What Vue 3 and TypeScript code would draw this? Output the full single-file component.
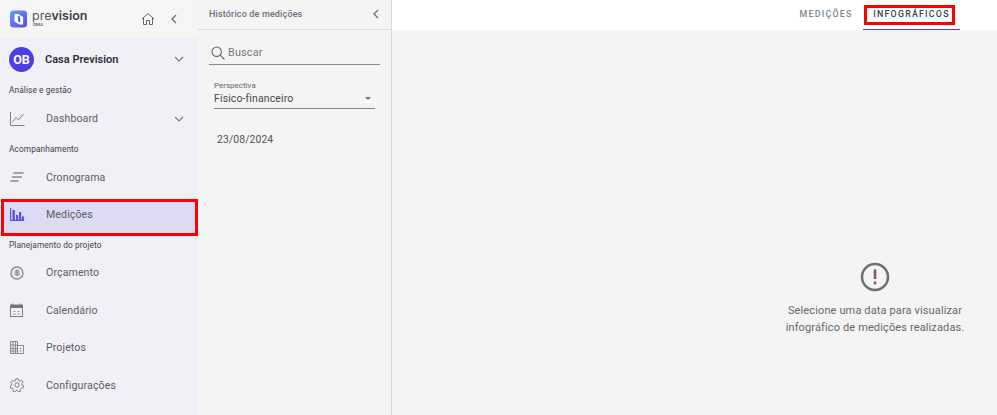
<script setup lang="ts">
interface Item { label: string; icon: string; active?: boolean; chevron?: boolean }
interface Group { title: string; items: Item[]; cls: string }
const groups: Group[] = [
  { title: 'Análise e gestão', cls: 'g1', items: [{ label: 'Dashboard', icon: 'chart', chevron: true }] },
  { title: 'Acompanhamento', cls: 'g2', items: [{ label: 'Cronograma', icon: 'lines' }, { label: 'Medições', icon: 'bars', active: true }] },
  { title: 'Planejamento do projeto', cls: 'g3', items: [{ label: 'Orçamento', icon: 'coin' }, { label: 'Calendário', icon: 'cal' }, { label: 'Projetos', icon: 'build' }, { label: 'Configurações', icon: 'gear' }] },
]
</script>

<template>
  <div class="app">
    <aside class="nav">
      <div class="brand">
        <svg class="logo" width="18" height="18" viewBox="0 0 18 18">
          <defs><linearGradient id="lg" x1="0" y1="0" x2="1" y2="1"><stop offset="0" stop-color="#62a0f6" /><stop offset="1" stop-color="#5a46e6" /></linearGradient></defs>
          <rect width="17" height="17" y="0.5" rx="3.500" fill="url(#lg)" />
          <path d="M4.500 4h3.600l5 3v7.500H9.500L4.500 11.500z" fill="#fff" />
          <path d="M8.100 5.500l2 1.200v6l-2-1.200z" fill="#4a5fe8" />
        </svg>
        <div class="wordmark">
          <div class="pv">pre<b>vision</b></div>
          <div class="obra">OBRA</div>
        </div>
        <svg class="home" width="14" height="14" viewBox="0 0 14 14" fill="none" stroke="#6b6258" stroke-width="1">
          <path d="M1 7L7 1.500 13 7M2.500 6v6.500h3v-4h3v4h3V6" />
        </svg>
        <svg class="back" width="8" height="10" viewBox="0 0 8 10" fill="none" stroke="#6a6a6a" stroke-width="1.300"><path d="M6 1L2 5l4 4" /></svg>
      </div>
      <div class="lav">
        <div class="account">
          <div class="avatar">OB</div>
          <div class="acname">Casa Prevision</div>
          <svg class="chev" width="10" height="6" viewBox="0 0 10 6" fill="none" stroke="#777" stroke-width="1.100"><path d="M1 1l4 4 4-4" /></svg>
        </div>
        <section v-for="g in groups" :key="g.title" :class="g.cls">
          <div class="gtitle">{{ g.title }}</div>
          <div v-for="it in g.items" :key="it.label" class="item" :class="{ active: it.active }">
            <span class="ico">
              <svg v-if="it.icon === 'chart'" width="15" height="14" viewBox="0 0 15 14" fill="none" stroke="#808080" stroke-width="1"><path d="M.5 0v13.500H14.500M2.500 10L6 5.500l2.500 2.500L13.500 2" /></svg>
              <svg v-else-if="it.icon === 'lines'" width="14" height="10" viewBox="0 0 14 10" fill="none" stroke="#8a8a8a" stroke-width="1.500"><path d="M3.500 1h10M2 5h10M.5 9h8" /></svg>
              <svg v-else-if="it.icon === 'bars'" width="14" height="13" viewBox="0 0 14 13" fill="#5a50e0"><path d="M0 0h1.200v11.800H14V13H0zM2.500 2h2.400v9.800H2.500zM6 7h2.200v4.800H6zM9 4h2.200v7.800H9zM11.800 8.500H14v3.300h-2.200z" /></svg>
              <svg v-else-if="it.icon === 'coin'" width="14" height="14" viewBox="0 0 14 14"><circle cx="7" cy="7" r="6" fill="none" stroke="#8a8a8a" stroke-width="1.400" /><circle cx="7" cy="7" r="3.500" fill="#c9c9ce" /><text x="7" y="9.200" text-anchor="middle" font-size="6.500" fill="#666" font-family="Roboto, sans-serif">$</text></svg>
              <svg v-else-if="it.icon === 'cal'" width="13" height="14" viewBox="0 0 13 14"><rect x=".5" y="2" width="12" height="11.500" fill="none" stroke="#808080" /><rect x=".5" y="2" width="12" height="3" fill="#757575" /><path d="M3 .5v2M10 .5v2" stroke="#757575" /><path d="M3.500 8.500h2M7.500 8.500h2M3.500 11h2M7.500 11h2" stroke="#999" /></svg>
              <svg v-else-if="it.icon === 'build'" width="14" height="13" viewBox="0 0 14 13" fill="none" stroke="#808080" stroke-width=".9"><path d="M.5.500h7v12h-7zM7.500 4.500h6v8h-6zM.5 4h7M.5 7.500h7M.5 10h7M3 .5v12M5.500.5v12M9.500 7.500h2M9.500 10h2" /></svg>
              <svg v-else width="14" height="14" viewBox="0 0 14 14" fill="none" stroke="#808080" stroke-width="1"><circle cx="7" cy="7" r="2.200" /><path d="M5.800.8h2.400l.4 1.800 1.300.6 1.600-.9 1.500 1.800-1.100 1.400.2 1.500 1.600.9-.6 2.200-1.800.1-.9 1.200.3 1.800-2.200.7-1-1.500H6.200l-1 1.500-2.200-.7.3-1.800-.9-1.200-1.800-.1L0 8.100l1.600-.9.200-1.500L.700 4.300l1.500-1.800 1.600.9 1.300-.6z" /></svg>
            </span>
            <span class="ilabel">{{ it.label }}</span>
            <svg v-if="it.chevron" class="chev" width="10" height="6" viewBox="0 0 10 6" fill="none" stroke="#777" stroke-width="1.100"><path d="M1 1l4 4 4-4" /></svg>
            <div v-if="it.active" class="mark nav-mark"></div>
          </div>
        </section>
      </div>
    </aside>

    <aside class="panel">
      <div class="phead">
        <span>Histórico de medições</span>
        <svg width="8" height="10" viewBox="0 0 8 10" fill="none" stroke="#6a6a6a" stroke-width="1.200"><path d="M6 1L2 5l4 4" /></svg>
      </div>
      <div class="search">
        <svg width="14" height="14" viewBox="0 0 14 14" fill="none" stroke="#666" stroke-width="1.100"><circle cx="5.700" cy="5.700" r="4.700" /><path d="M9.200 9.200l4.300 4.300" /></svg>
        <span>Buscar</span>
      </div>
      <div class="select">
        <div class="slabel">Perspectiva</div>
        <div class="sval"><span>Físico-financeiro</span><i class="caret"></i></div>
      </div>
      <div class="date">23/08/2024</div>
    </aside>

    <main class="main">
      <div class="tabs">
        <div class="tab">MEDIÇÕES</div>
        <div class="tab on">INFOGRÁFICOS<div class="mark tab-mark"></div></div>
      </div>
      <div class="empty">
        <svg width="30" height="30" viewBox="0 0 30 30"><circle cx="15" cy="15" r="13" fill="none" stroke="#6e6e6e" stroke-width="2.500" /><rect x="13.700" y="7.500" width="2.600" height="9.500" fill="#8a5a5a" /><rect x="13.700" y="19.500" width="2.600" height="2.800" fill="#8a5a5a" /></svg>
        <p>Selecione uma data para visualizar<br />infográfico de medições realizadas.</p>
      </div>
    </main>
  </div>
</template>

<style>
html, body { margin: 0; }
</style>

<style scoped>
.app { display: flex; width: 997px; height: 415px; overflow: hidden; font-family: Roboto, "Liberation Sans", sans-serif; background: #f4f4f4; color: #555; }
.nav { width: 198px; flex: none; display: flex; flex-direction: column; background: #f5f5f5; }
.brand { height: 38px; display: flex; align-items: center; padding-left: 10px; box-sizing: border-box; flex: none; }
.logo { flex: none; margin-top: -1px; }
.wordmark { margin-left: 4px; width: 109px; margin-top: -2px; }
.pv { font-family: Inter, "Open Sans", sans-serif; font-size: 12.500px; line-height: 14px; color: #55555f; }
.pv b { font-weight: 600; color: #3d3d48; }
.obra { font-size: 3.500px; line-height: 5px; color: #666; font-weight: 700; letter-spacing: .2px; margin-left: 1px; }
.home { margin-top: -1px; }
.back { margin-left: 15px; margin-top: -1px; }
.lav { flex: 1; background: #f0f0f6; }
.account { height: 42px; display: flex; align-items: center; padding-left: 9px; box-sizing: border-box; position: relative; }
.avatar { width: 25px; height: 25px; border-radius: 50%; background: #4c3ee0; color: #fff; font-size: 12.500px; font-weight: 700; text-align: center; line-height: 25px; flex: none; margin-top: 1px; }
.acname { margin-left: 11px; font-size: 11px; font-weight: 600; color: #2f2f38; flex: 1; margin-top: 1px; }
.chev { position: absolute; right: 14px; top: 50%; margin-top: -3px; }
.gtitle { font-size: 8.300px; line-height: 12px; color: #444; padding-left: 9px; letter-spacing: .1px; }
.g1 { padding-top: 4px; }
.g2 { padding-top: 5px; }
.g3 { padding-top: 5.500px; }
.item { position: relative; height: 37.500px; display: flex; align-items: center; }
.g1 .item { margin-top: 4px; }
.g2 .item { margin-top: 4px; }
.g2 .item + .item { margin-top: 0; }
.g3 .gtitle + .item { margin-top: 2.800px; }
.ico { width: 46px; flex: none; display: flex; padding-left: 10px; box-sizing: border-box; align-items: center; }
.ilabel { font-size: 10.600px; color: #5c5c5c; letter-spacing: .1px; }
.item.active::before { content: ""; position: absolute; left: 3px; right: 2px; top: 4px; bottom: -1px; background: #dcdaf5; z-index: 0; }
.item > * { position: relative; z-index: 1; }
.item > .chev { position: absolute; }
.mark { position: absolute; border: 3px solid #f00; box-sizing: border-box; pointer-events: none; }
.item > .nav-mark { position: absolute; left: 1px; right: 0; top: 2.500px; bottom: -2px; z-index: 2; }
.panel { width: 194px; flex: none; border-right: 1px solid #d8d8d8; background: #f4f4f4; box-sizing: border-box; display: flex; flex-direction: column; }
.phead { height: 30px; flex: none; border-bottom: 1px solid #dcdcdc; display: flex; align-items: center; justify-content: space-between; padding: 0 11px 2px 11px; box-sizing: border-box; font-size: 9px; font-weight: 500; color: #6a7078; letter-spacing: .15px; }
.search { margin: 14px 11px 0 11px; height: 21px; border-bottom: 1px solid #8a8a8a; display: flex; align-items: center; gap: 3px; font-size: 10.800px; color: #777; padding: 0 0 3px 2px; box-sizing: border-box; letter-spacing: .2px; }
.select { margin: 14px 16px 0 16px; border-bottom: 1px solid #888; height: 30px; box-sizing: border-box; padding-top: 2px; }
.slabel { font-size: 8px; line-height: 10px; color: #666; }
.sval { display: flex; align-items: center; justify-content: space-between; font-size: 10.500px; line-height: 15px; color: #4a4a4a; letter-spacing: .12px; padding-right: 4px; }
.caret { width: 0; height: 0; border-left: 3.500px solid transparent; border-right: 3.500px solid transparent; border-top: 3.500px solid #777; }
.date { margin: 24px 0 0 19px; font-size: 10.400px; line-height: 14px; color: #555; letter-spacing: .1px; }
.main { flex: 1; display: flex; flex-direction: column; min-width: 0; }
.tabs { height: 30px; flex: none; background: #fff; display: flex; justify-content: flex-end; padding-right: 37px; box-sizing: border-box; }
.tab { position: relative; font-size: 8.800px; font-weight: 500; letter-spacing: 1.250px; color: #7c8690; line-height: 30px; height: 30px; box-sizing: border-box; width: 74px; text-align: center; margin-top: -1px; }
.tab.on { width: 97px; color: #3b4250; font-weight: 500; border-bottom: 1px solid #4c3ee0; height: 31px; }
.tab-mark { left: 1px; right: 5px; top: 6px; bottom: 4px; }
.empty { flex: 1; display: flex; flex-direction: column; align-items: center; padding-top: 232px; padding-left: 385px; padding-right: 24px; box-sizing: border-box; width: 100%; }
.empty p { margin: 11px 0 0; font-size: 11px; line-height: 16.500px; text-align: center; color: #666; white-space: nowrap; letter-spacing: .13px; }
</style>
